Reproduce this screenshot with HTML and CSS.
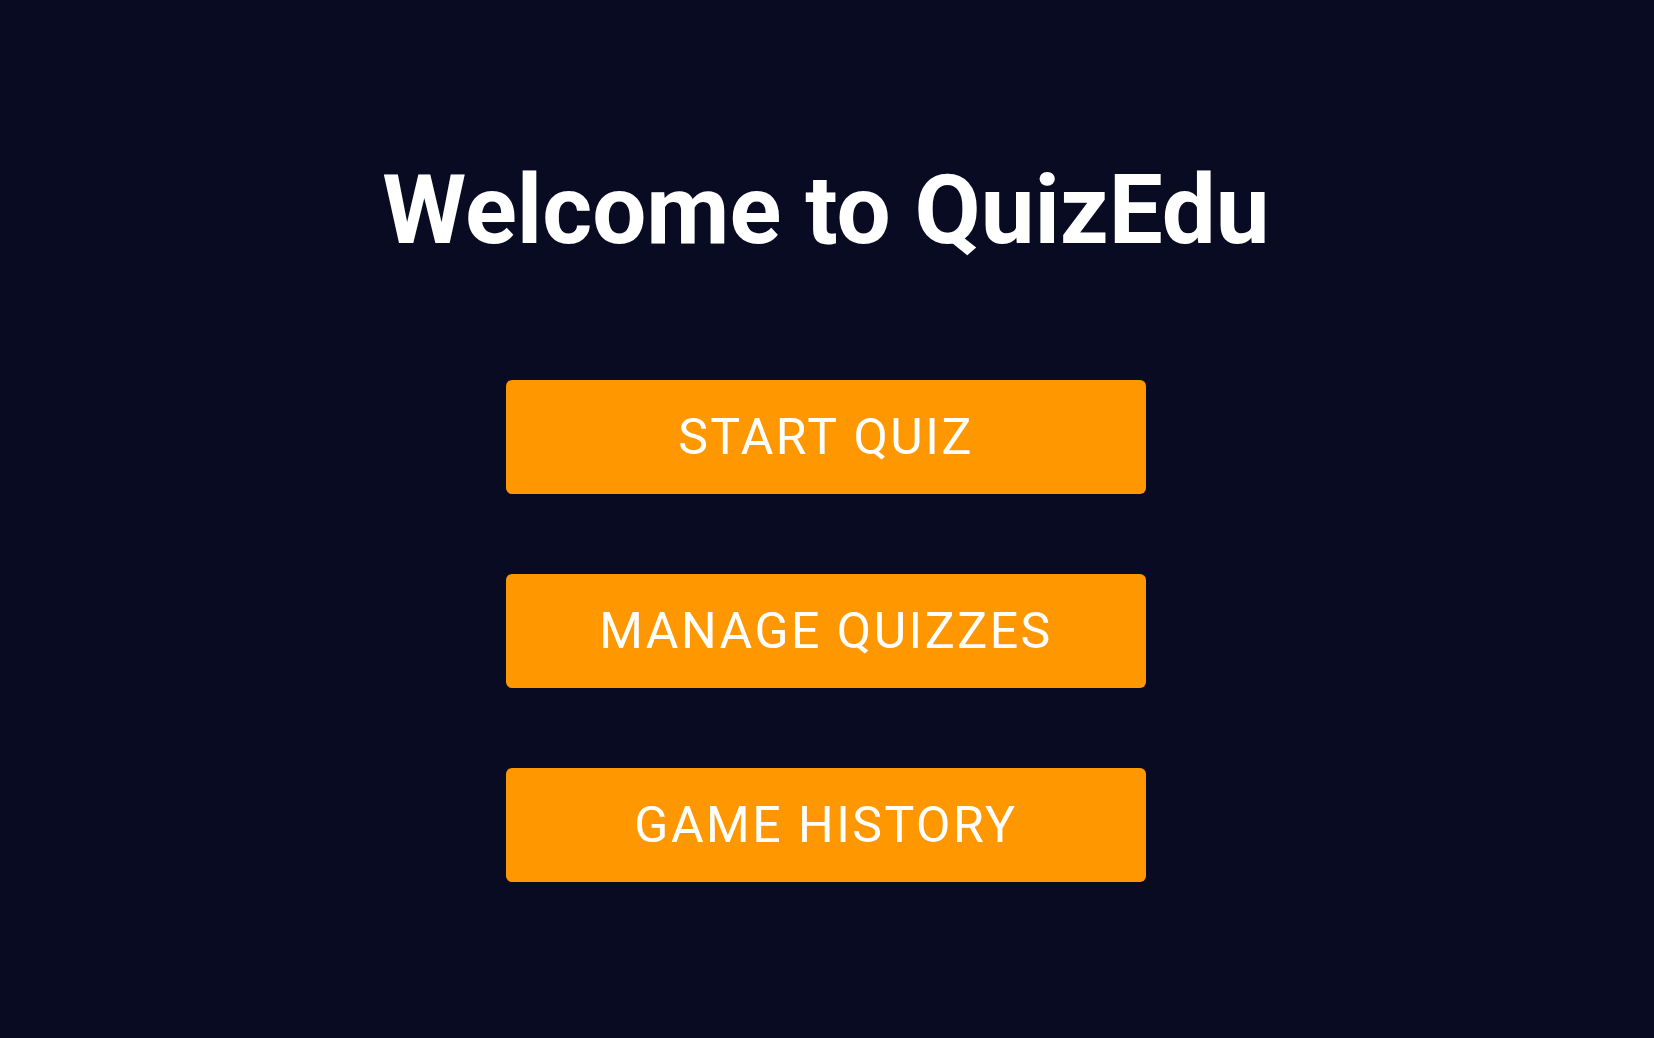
FILE: index.html
```html
<!DOCTYPE html>
<html lang="en">
<head>
<meta charset="utf-8">
<title>QuizEdu</title>
<link rel="stylesheet" href="styles.css">
</head>
<body>
<main class="home">
  <h1 class="title">Welcome to QuizEdu</h1>
  <nav class="menu">
    <button class="menu-btn">START QUIZ</button>
    <button class="menu-btn">MANAGE QUIZZES</button>
    <button class="menu-btn">GAME HISTORY</button>
  </nav>
</main>
</body>
</html>
```
FILE: styles.css
```css
html, body {
  margin: 0;
  padding: 0;
  background: #080b22;
  height: 100%;
}
body {
  font-family: Roboto, "Liberation Sans", sans-serif;
  color: #ffffff;
}
.home {
  display: flex;
  flex-direction: column;
  align-items: center;
  padding-top: 162px;
  padding-right: 2px;
}
.title {
  margin: 0;
  font-size: 96px;
  line-height: 1;
  font-weight: 700;
  letter-spacing: 0;
}
.menu {
  display: flex;
  flex-direction: column;
  gap: 80px;
  margin-top: 122px;
}
.menu-btn {
  width: 640px;
  height: 114px;
  border: none;
  border-radius: 6px;
  background: #ff9800;
  color: #ffffff;
  font-family: Roboto, "Liberation Sans", sans-serif;
  font-size: 50px;
  font-weight: 400;
  letter-spacing: 2.5px;
  padding: 0;
  cursor: pointer;
}
```
